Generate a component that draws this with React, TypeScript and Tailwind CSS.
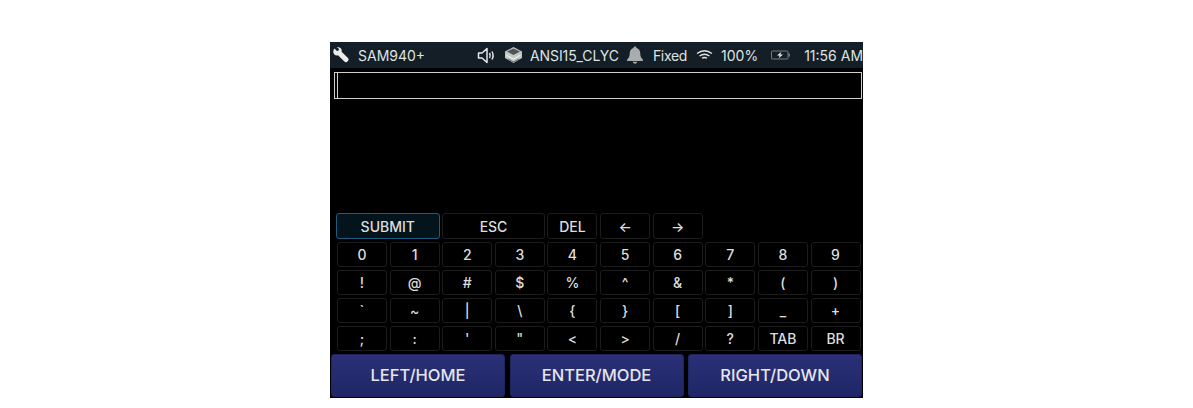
import React from "react";

const rows = [
  ["0","1","2","3","4","5","6","7","8","9"],
  ["!","@","#","$","%","^","&","*","(",")"],
  ["`","~","|","\\","{","}","[","]","_","+"],
  [";",":","'","\"","<",">","/","?","TAB","BR"],
];

function Key({ label, className = "" }: { label: string; className?: string }) {
  return (
    <div className={`flex items-center justify-center rounded-[3px] border border-[#1c1c1c] bg-black text-[14px] font-medium text-[#dedede] ${className}`}>
      {label}
    </div>
  );
}

function BottomButton({ label }: { label: string }) {
  return (
    <div className="flex flex-1 items-center justify-center rounded-[3px] border border-[#1f2560] bg-gradient-to-b from-[#2b3077] to-[#1f2766] text-[16.5px] font-medium text-[#e6e6ee]">
      {label}
    </div>
  );
}

export default function App() {
  return (
    <div className="h-[408px] w-full bg-white pt-[42px] font-['Inter',sans-serif]">
      <div className="mx-auto flex h-[356px] w-[533px] flex-col bg-black">
        <div className="flex h-[26px] items-center bg-[#141e26] pl-[3px] text-[14px] text-[#dfe3e2]">
          <svg width="16" height="16" viewBox="0 0 16 16" fill="#ececec">
            <path d="M1.500 1.500 4 4l1.600-.6L6 1.800 3.800.4C6 -.2 8.200.8 8.700 3c.1.700.1 1.200-.1 1.700l6.400 6.300c.8.800.8 2 .1 2.800l-.9.900c-.8.700-2 .7-2.800-.1L5 8.200C3 8.800 1 7.900.4 5.800.1 4.800.4 2.800 1.500 1.500z" />
          </svg>
          <span className="ml-[9px]">SAM940+</span>
          <svg className="ml-[52px]" width="19" height="17" viewBox="0 0 19 17" fill="none" stroke="#e8e8e8" strokeWidth="1.500">
            <path d="M1.500 6h3.500l5-4.500v14L5 11H1.500z" strokeLinejoin="round" />
            <path d="M12.500 6q1.500 2.500 0 5M15 4.500q2.200 4 0 8" strokeWidth="1.500" />
          </svg>
          <svg className="ml-[8px]" width="19" height="18" viewBox="0 0 19 18">
            <path d="M9.500 1 18 5.500v6.500L9.500 17 1 12V5.500z" fill="#c4c7c7" />
            <path d="M9.500 2.500 16 5.500 9.500 9 3 5.500z" fill="#4e5458" />
            <path d="M2.500 8.500l7 4 7-4v1.300l-7 4-7-4z" fill="#f0f0f0" />
            <path d="M4 12.500l5.500 3 5.500-3v1l-5.500 3-5.500-3z" fill="#6a6f73" />
          </svg>
          <span className="ml-[7px] tracking-[-0.1px]">ANSI15_CLYC</span>
          <svg className="ml-[7px]" width="18" height="18" viewBox="0 0 18 18" fill="#a9adad">
            <path d="M9 0.500c.9 0 1.500.6 1.500 1.400C13 2.600 14.300 4.700 14.300 7.500c0 3 .9 4.500 2.500 6 .6.600.2 1.500-.6 1.500H1.800c-.8 0-1.200-.9-.6-1.500 1.600-1.500 2.500-3 2.500-6 0-2.800 1.300-4.900 3.800-5.600C7.500 1.100 8.100.5 9 .5z" />
            <path d="M6.800 15.800h4.400C11 17 10.100 17.700 9 17.700S7 17 6.800 15.800z" />
          </svg>
          <span className="ml-[9px] tracking-[-0.3px]">Fixed</span>
          <svg className="ml-[9px]" width="17" height="12" viewBox="0 0 17 12" fill="none" stroke="#e4e4e4" strokeWidth="1.300">
            <path d="M1 4.500q7.500-5.500 15 0M3.500 7q5-3.500 10 0M6 9.300q2.500-1.600 5 0" />
          </svg>
          <span className="ml-[8px]">100%</span>
          <svg className="ml-[13px]" width="19" height="10" viewBox="0 0 19 10" fill="none">
            <rect x="0.500" y="1" width="16.500" height="8" rx="1" stroke="#777c80" />
            <rect x="17.500" y="3.500" width="1.500" height="3" fill="#777c80" />
            <path d="M10.500 1.800 6 5.500h2.700L7.700 8.300l4.300-3.700H9.300z" fill="#f0f0f0" />
          </svg>
          <span className="ml-[14px] whitespace-nowrap">11:56 AM</span>
        </div>

        <div className="mt-[4px] ml-[4px] mr-[1px] h-[27px] border border-[#cfcfcf] pl-[2px]">
          <div className="h-full w-px bg-[#cfcfcf]" />
        </div>

        <div className="flex-1" />

        <div className="grid grid-cols-10 gap-x-[2.700px] gap-y-[2.800px] pl-[7px] pr-[2.500px]">
          <div className="col-span-2 -ml-[1px] flex h-[26px] items-center justify-center rounded-[3px] border border-[#1c5c80] bg-[#04141c] text-[14px] font-medium text-[#dedede]">
            SUBMIT
          </div>
          <Key label="ESC" className="col-span-2 h-[26px]" />
          <Key label="DEL" className="h-[26px]" />
          <Key label="←" className="h-[26px] font-bold" />
          <Key label="→" className="h-[26px] font-bold" />
          <div className="col-span-3" />
          {rows.flat().map((k, i) => (
            <Key key={i} label={k} className="h-[25px]" />
          ))}
        </div>

        <div className="mt-[3.500px] mb-[1px] flex h-[43px] gap-[4.500px] pl-[1px] pr-[1px]">
          <BottomButton label="LEFT/HOME" />
          <BottomButton label="ENTER/MODE" />
          <BottomButton label="RIGHT/DOWN" />
        </div>
      </div>
    </div>
  );
}
